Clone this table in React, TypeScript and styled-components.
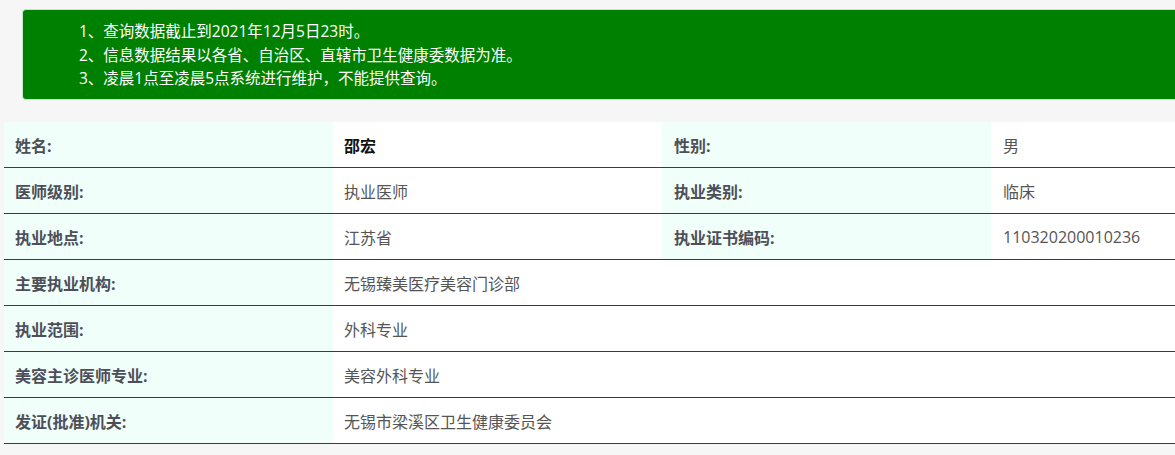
import React from "react";
import styled, { createGlobalStyle } from "styled-components";

const Global = createGlobalStyle`
  html, body {
    margin: 0;
    padding: 0;
    background: #f6f6f6;
    overflow: hidden;
  }
  body {
    font-family: "Open Sans", "Noto Sans CJK SC", sans-serif;
  }
`;

const Page = styled.div`
  padding-top: 9px;
  display: flex;
  flex-direction: column;
`;

const Notice = styled.div`
  margin-left: 22px;
  box-sizing: border-box;
  height: 91px;
  background: #008000;
  border: 1px solid #c6e8c6;
  border-right: none;
  border-radius: 4px 0 0 4px;
  padding: 10px 0 0 56px;
  color: #ffffff;
  font-size: 15.5px;
  line-height: 23.5px;
`;

const NoticeLine = styled.div`
  white-space: nowrap;
`;

const Table = styled.div`
  margin-top: 22px;
  margin-left: 4px;
  display: flex;
  flex-direction: column;
`;

const Row = styled.div`
  display: grid;
  grid-template-columns: 329px 329px 329px 1fr;
  height: 46px;
  border-bottom: 1px solid #0f5433;
  box-sizing: border-box;
`;

const Label = styled.div<{ $pad?: number }>`
  background: #f0fffa;
  display: flex;
  align-items: center;
  padding-left: ${(p) => p.$pad ?? 11}px;
  font-size: 16px;
  font-weight: 700;
  color: #4e4e58;
  white-space: nowrap;
`;

const Value = styled.div<{ $strong?: boolean; $span?: boolean; $pad?: number }>`
  background: #ffffff;
  display: flex;
  align-items: center;
  padding-left: ${(p) => p.$pad ?? 11}px;
  font-size: 16px;
  font-weight: ${(p) => (p.$strong ? 700 : 400)};
  color: ${(p) => (p.$strong ? "#111111" : "#555555")};
  grid-column: ${(p) => (p.$span ? "2 / 5" : "auto")};
  white-space: nowrap;
  overflow: hidden;
`;

const pairs: [string, string, string, string][] = [
  ["姓名:", "邵宏", "性别:", "男"],
  ["医师级别:", "执业医师", "执业类别:", "临床"],
  ["执业地点:", "江苏省", "执业证书编码:", "110320200010236"],
];

const singles: [string, string][] = [
  ["主要执业机构:", "无锡臻美医疗美容门诊部"],
  ["执业范围:", "外科专业"],
  ["美容主诊医师专业:", "美容外科专业"],
  ["发证(批准)机关:", "无锡市梁溪区卫生健康委员会"],
];

export default function App() {
  return (
    <>
      <Global />
      <Page>
        <Notice>
          <NoticeLine>1、查询数据截止到2021年12月5日23时。</NoticeLine>
          <NoticeLine>2、信息数据结果以各省、自治区、直辖市卫生健康委数据为准。</NoticeLine>
          <NoticeLine>3、凌晨1点至凌晨5点系统进行维护，不能提供查询。</NoticeLine>
        </Notice>
        <Table>
          {pairs.map(([l1, v1, l2, v2], i) => (
            <Row key={l1}>
              <Label>{l1}</Label>
              <Value $strong={i === 0}>{v1}</Value>
              <Label $pad={12}>{l2}</Label>
              <Value $pad={12}>{v2}</Value>
            </Row>
          ))}
          {singles.map(([l, v]) => (
            <Row key={l}>
              <Label>{l}</Label>
              <Value $span>{v}</Value>
            </Row>
          ))}
        </Table>
      </Page>
    </>
  );
}
